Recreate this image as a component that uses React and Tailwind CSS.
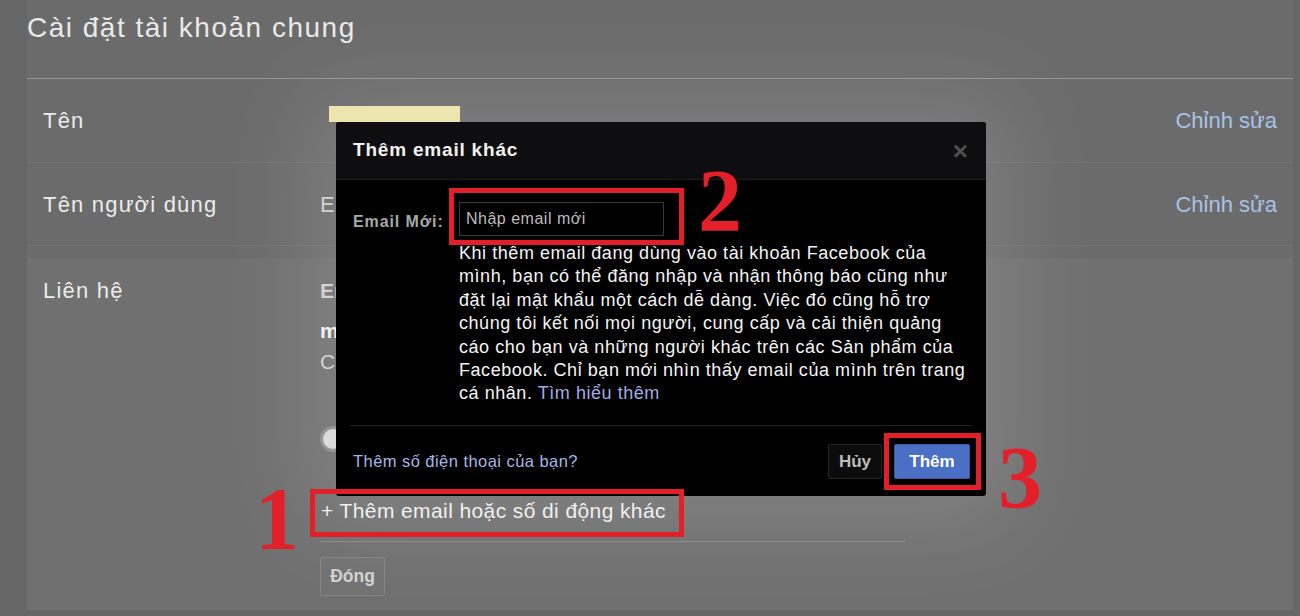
import React from 'react';

const sans = { fontFamily: '"Liberation Sans", Arial, sans-serif' };

const RedBox = ({ className }) => (
  <div className={`absolute border-[5px] border-[#e3202a] ${className}`} />
);

const Num = ({ children, className }) => (
  <div
    className={`absolute font-bold text-[#e3202a] text-[88px] leading-none ${className}`}
    style={{ fontFamily: '"Liberation Serif", "Times New Roman", serif' }}
  >
    {children}
  </div>
);

const Row = ({ label, value, height }) => (
  <div className={`flex items-center ${height} border-b border-[#747474]`}>
    <div className="w-[293px] pl-4 text-[22px] tracking-[1.2px] text-[#ececec]">{label}</div>
    <div className="flex-1 text-[22px] text-[#cfcfcf]">{value}</div>
    <div className="pr-4 text-[22px] text-[#a9c3e6]">Chỉnh sửa</div>
  </div>
);

const Modal = () => (
  <div className="absolute left-[336px] top-[122px] w-[650px] h-[374px] bg-black rounded-[3px] shadow-[0_0_90px_30px_rgba(255,255,255,0.13)] flex flex-col">
    <div className="h-[58px] bg-[#0e0e10] border-b border-[#1d1d1f] rounded-t-[3px] flex items-center justify-between pl-[17px] pr-[18px]">
      <span className="text-[19px] tracking-[0.8px] font-bold text-[#f2f2f2]">Thêm email khác</span>
      <span className="text-[26px] font-bold text-[#4f4f52] leading-none">×</span>
    </div>
    <div className="flex pl-[17px] pt-[22px]">
      <div className="w-[106px] pt-[8px] text-[16px] tracking-[0.9px] font-bold text-[#a8a8a8]">Email Mới:</div>
      <div className="flex flex-col">
        <div className="w-[205px] h-[34px] border border-[#3a3a3a] flex items-center pl-[6px] text-[16px] tracking-[0.5px] text-[#bdbdbd]">
          Nhập email mới
        </div>
        <p className="mt-[6px] text-[18px] tracking-[0.55px] leading-[23.4px] text-[#f4f4f4] whitespace-nowrap">
          Khi thêm email đang dùng vào tài khoản Facebook của<br />
          mình, bạn có thể đăng nhập và nhận thông báo cũng như<br />
          đặt lại mật khẩu một cách dễ dàng. Việc đó cũng hỗ trợ<br />
          chúng tôi kết nối mọi người, cung cấp và cải thiện quảng<br />
          cáo cho bạn và những người khác trên các Sản phẩm của<br />
          Facebook. Chỉ bạn mới nhìn thấy email của mình trên trang<br />
          cá nhân. <span className="text-[#a3abe6]">Tìm hiểu thêm</span>
        </p>
      </div>
    </div>
    <div className="mx-[14px] mt-[19px] border-t border-[#242424]" />
    <div className="flex items-center justify-between pl-[17px] pr-[16px] pt-[18px]">
      <span className="text-[16.5px] tracking-[0.45px] text-[#a8b4e6]">Thêm số điện thoại của bạn?</span>
      <div className="flex gap-[12px]">
        <button className="h-[35px] w-[54px] bg-[#0c0c0d] border border-[#262628] rounded-[2px] text-[17px] font-bold text-[#bcbcbc]">
          Hủy
        </button>
        <button className="h-[35px] w-[76px] bg-[#4a6fc4] border border-[#3b5aa3] rounded-[2px] text-[17px] font-bold text-white">
          Thêm
        </button>
      </div>
    </div>
  </div>
);

const App = () => {
  return (
    <div className="relative w-[1300px] h-[616px] overflow-hidden bg-[#666666] flex" style={sans}>
      <div className="ml-[27px] w-[1266px] h-[610px] bg-[#6b6b6b] flex flex-col">
        <div className="h-[79px] border-b border-[#949494] flex items-start pt-[7px]">
          <h1 className="text-[28px] tracking-[1.5px] text-[#e9e9e9]">Cài đặt tài khoản chung</h1>
        </div>
        <Row label="Tên" value="" height="h-[84px]" />
        <Row label="Tên người dùng" value="Email" height="h-[83px]" />
        <div className="mt-[12px] flex-1 bg-[#707070] flex">
          <div className="w-[293px] pl-4 pt-[16px] text-[22px] tracking-[1.2px] text-[#ececec]">Liên hệ</div>
          <div className="flex flex-col pt-[17px] text-[#dcdcdc]">
            <div className="text-[21px] font-bold text-[#cfcfcf]">Email</div>
            <div className="mt-[8px] text-[21px] font-bold text-[#f0f0f0]">mail@gmail.com</div>
            <div className="text-[21px] text-[#d0d0d0]">Chính</div>
            <div className="mt-[48px] w-[26px] h-[26px] rounded-full border-[3px] border-[#8a8a8a] bg-[#d8d8d8]" />
            <div className="mt-[43px] text-[21px] tracking-[0.4px] text-[#efefef] pl-[1px]">+ Thêm email hoặc số di động khác</div>
            <div className="mt-[15px] w-[585px] border-t border-[#8a8a8a]" />
            <button className="mt-[15px] w-[65px] h-[39px] border border-[#858585] bg-[#727272] rounded-[2px] text-[17.5px] font-bold text-[#d2d2d2]">
              Đóng
            </button>
          </div>
        </div>
      </div>

      <div className="absolute left-[329px] top-[106px] w-[131px] h-[16px] bg-[#ece3a9]" />

      <Modal />

      <RedBox className="left-[310px] top-[489px] w-[374px] h-[48px]" />
      <RedBox className="left-[449px] top-[188px] w-[235px] h-[57px]" />
      <RedBox className="left-[884px] top-[433px] w-[97px] h-[57px]" />

      <Num className="left-[255px] top-[475px]">1</Num>
      <Num className="left-[698px] top-[157px]">2</Num>
      <Num className="left-[998px] top-[434px]">3</Num>
    </div>
  );
};

export default App;
